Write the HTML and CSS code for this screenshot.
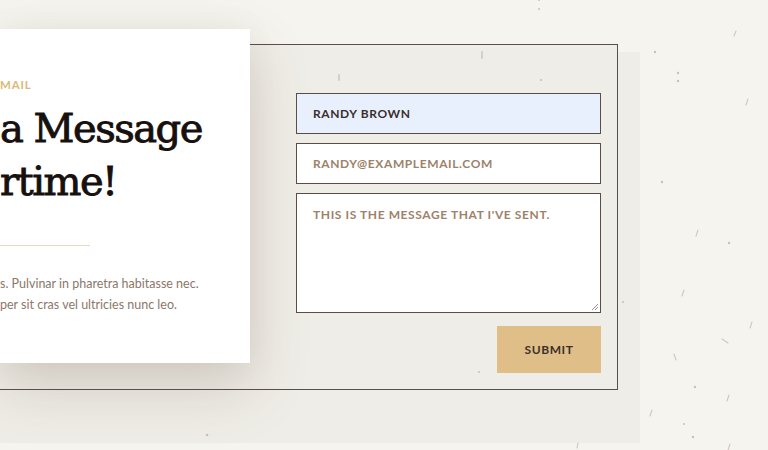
FILE: index.html
```html
<!DOCTYPE html>
<html>
<head>
<meta charset="utf-8">
<link rel="stylesheet" href="styles.css">
</head>
<body>
<div class="scene">
  <div class="panel">
    <div class="box">
      <div class="card">
        <p class="eyebrow">MAIL</p>
        <h1 class="title">a Message<br>rtime!</h1>
        <div class="divider"></div>
        <p class="copy">s. Pulvinar in pharetra habitasse nec.<br>per sit cras vel ultricies nunc leo.</p>
      </div>
      <form class="form">
        <div class="field field-filled">RANDY BROWN</div>
        <div class="field">RANDY@EXAMPLEMAIL.COM</div>
        <div class="field field-area">THIS IS THE MESSAGE THAT I'VE SENT.
          <svg class="grip" width="8" height="8" viewBox="0 0 8 8"><path d="M7 1L1 7M7 4L4 7" stroke="#9a9090" stroke-width="1"/></svg>
        </div>
        <div class="actions"><button type="button" class="submit">SUBMIT</button></div>
      </form>
    </div>
  </div>
  <svg class="specks" width="768" height="450" viewBox="0 0 768 450">
    <g fill="#c9c0b8">
      <circle cx="655" cy="52" r="1.2"/>
      <circle cx="678" cy="73" r="1.2"/>
      <circle cx="678" cy="81" r="1.2"/>
      <circle cx="662" cy="182" r="1.2"/>
      <circle cx="729" cy="243" r="1.2"/>
      <circle cx="623" cy="302" r="1"/>
      <circle cx="695" cy="387" r="1.2"/>
      <circle cx="684" cy="424" r="1"/>
      <circle cx="693" cy="437" r="1.2"/>
      <circle cx="541" cy="80" r="1.1"/>
      <circle cx="479" cy="372" r="1"/>
      <circle cx="207" cy="435" r="1.3"/>
      <circle cx="539" cy="9" r="1"/>
      <circle cx="539" cy="0" r="1"/>
    </g>
    <g stroke="#cfc6be" stroke-width="1.1" stroke-linecap="round">
      <line x1="734" y1="36" x2="736" y2="31"/>
      <line x1="746" y1="105" x2="748" y2="99"/>
      <line x1="696" y1="236" x2="698" y2="230"/>
      <line x1="682" y1="296" x2="684" y2="290"/>
      <line x1="750" y1="328" x2="752" y2="322"/>
      <line x1="722" y1="339" x2="728" y2="343"/>
      <line x1="674" y1="354" x2="676" y2="360"/>
      <line x1="727" y1="401" x2="729" y2="395"/>
      <line x1="650" y1="416" x2="652" y2="410"/>
      <line x1="728" y1="450" x2="730" y2="444"/>
      <line x1="577" y1="448" x2="578" y2="443"/>
    </g>
    <g stroke="#d3cbc3" stroke-width="1.8" stroke-linecap="round">
      <line x1="482" y1="52" x2="482" y2="58"/>
      <line x1="339" y1="75" x2="339" y2="80"/>
    </g>
  </svg>
</div>
</body>
</html>
```
FILE: styles.css
```css
html, body {
  margin: 0;
  padding: 0;
}
body {
  width: 768px;
  height: 450px;
  overflow: hidden;
  background: #f6f4ef;
  font-family: "Lato", "Liberation Sans", sans-serif;
}
.scene {
  position: relative;
  width: 768px;
  height: 450px;
  padding-top: 52px;
  box-sizing: border-box;
}
.panel {
  width: 640px;
  height: 391px;
  background: #efede7;
}
.box {
  position: relative;
  top: -8px;
  margin-left: -1px;
  width: 619px;
  height: 346px;
  box-sizing: border-box;
  border: 1px solid #5b4f49;
  background: #efede7;
  display: flex;
  align-items: flex-start;
}
.card {
  margin-top: -16px;
  width: 250px;
  height: 334px;
  box-sizing: border-box;
  background: #ffffff;
  padding: 48px 0 0 0;
  box-shadow: 0 24px 55px rgba(105, 85, 65, 0.22), 0 0 30px rgba(105, 85, 65, 0.06);
  flex: none;
}
.eyebrow {
  margin: 0;
  font-size: 11.5px;
  line-height: 16px;
  font-weight: 700;
  letter-spacing: 0.8px;
  color: #dbb977;
}
.title {
  margin: 9px 0 0;
  font-family: "DejaVu Serif", "Liberation Serif", serif;
  font-weight: 400;
  font-size: 40px;
  line-height: 53px;
  color: #16100e;
  letter-spacing: -1.5px;
  -webkit-text-stroke: 0.9px #16100e;
}
.divider {
  margin-top: 37px;
  width: 90px;
  height: 1px;
  background: #ead9c1;
}
.copy {
  margin: 27px 0 0;
  font-size: 12.5px;
  line-height: 21px;
  color: #8c776a;
}
.form {
  margin: 48px 0 0 46px;
  width: 305px;
  display: flex;
  flex-direction: column;
  gap: 9px;
}
.field {
  position: relative;
  height: 41px;
  box-sizing: border-box;
  border: 1px solid #5b4c46;
  background: #ffffff;
  padding: 0 16px;
  font-size: 12px;
  line-height: 39px;
  font-weight: 700;
  letter-spacing: 0.6px;
  color: #9d8269;
}
.field-filled {
  background: #e8f0fe;
  color: #3a2e2b;
}
.field-area {
  height: 120px;
  line-height: 16px;
  padding-top: 13px;
}
.grip {
  position: absolute;
  right: 1px;
  bottom: 1px;
}
.actions {
  display: flex;
  justify-content: flex-end;
  margin-top: 4px;
}
.submit {
  width: 104px;
  height: 47px;
  border: none;
  background: #dfbf87;
  font-family: "Lato", "Liberation Sans", sans-serif;
  font-size: 12px;
  font-weight: 700;
  letter-spacing: 0.6px;
  color: #3c2f2c;
  padding: 0;
}
.specks {
  position: absolute;
  top: 0;
  left: 0;
  pointer-events: none;
}
```
